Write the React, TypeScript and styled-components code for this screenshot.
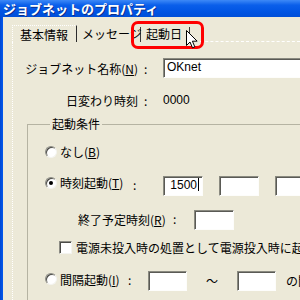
import React from 'react';
import styled, { createGlobalStyle } from 'styled-components';

/* ─── Global ─────────────────────────────────────────────── */

const GlobalStyle = createGlobalStyle`
  html, body {
    margin: 0;
    padding: 0;
    background: #ece9d8;
  }
  body {
    font-family: "Noto Sans CJK JP", "Noto Sans", sans-serif;
    font-size: 12px;
    color: #000;
  }
`;

/* ─── Window frame ───────────────────────────────────────── */

const Window = styled.div`
  position: relative;
  width: 300px;
  height: 300px;
  overflow: hidden;
  background: #ece9d8;
  display: flex;
  flex-direction: column;
`;

const TitleBar = styled.div`
  flex: none;
  height: 17px;
  padding-left: 3px;
  background: linear-gradient(#3d89f7 0%, #0a5fea 30%, #0054e3 70%, #004fd8 100%);
  color: #fff;
  font-weight: bold;
  font-size: 13px;
  line-height: 17px;
  white-space: nowrap;
  text-shadow: 1px 1px 0 #0b2f8c;
`;

const Frame = styled.div`
  flex: 1;
  display: flex;
  min-height: 0;
`;

const FrameEdge = styled.div`
  flex: none;
  width: 3px;
  background: linear-gradient(90deg, #0046d0, #0058ee);
`;

const Client = styled.div`
  flex: 1;
  min-width: 0;
  padding: 8px 0 0 9px;
  display: flex;
  flex-direction: column;
`;

/* ─── Tabs ───────────────────────────────────────────────── */

const TabStrip = styled.div`
  flex: none;
  display: flex;
  height: 17px;
`;

const Tab = styled.div<{ $active?: boolean; $w: number; $pad: number }>`
  flex: none;
  box-sizing: border-box;
  width: ${(p) => p.$w}px;
  padding-left: ${(p) => p.$pad}px;
  margin-top: ${(p) => (p.$active ? 0 : 2)}px;
  padding-top: ${(p) => (p.$active ? 2 : 0)}px;
  line-height: 14px;
  white-space: nowrap;
  border-top: ${(p) => (p.$active ? '1px dotted #fff' : 'none')};
  border-left: ${(p) => (p.$active ? '1px dotted #fff' : 'none')};
  border-right: 1px solid #2c2c2c;
  border-image: none;
  ${(p) => (p.$active ? '' : 'border-right-color: #3a3a3a;')}
`;

const TabFiller = styled.div`
  flex: 1;
  border-bottom: 1px dashed #fff;
`;

const Panel = styled.div`
  flex: 1;
  width: 560px;
  border-left: 1px dotted #fff;
  display: flex;
  flex-direction: column;
`;

/* ─── Form parts ─────────────────────────────────────────── */

const FieldRow = styled.div<{ $top: number }>`
  display: flex;
  align-items: center;
  height: 20px;
  margin-top: ${(p) => p.$top}px;
  white-space: nowrap;
`;

const FieldLabel = styled.div`
  width: 125px;
  text-align: right;
`;

const Colon = styled.div<{ $w: number; $pad?: number }>`
  flex: none;
  width: ${(p) => p.$w}px;
  padding-left: ${(p) => p.$pad ?? 6}px;
  box-sizing: border-box;
`;

const TextBox = styled.div<{ $w: number; $ml?: number; $right?: boolean }>`
  flex: none;
  box-sizing: border-box;
  width: ${(p) => p.$w}px;
  height: 20px;
  margin-left: ${(p) => p.$ml ?? 0}px;
  padding: 0 3px;
  background: #fff;
  border: 1px solid;
  border-color: #8a8a80 #fdfdfb #fdfdfb #8a8a80;
  box-shadow: inset 1px 1px 0 #5a5a55;
  line-height: 17px;
  text-align: ${(p) => (p.$right ? 'right' : 'left')};
  font-family: "Liberation Sans", "Noto Sans CJK JP", sans-serif;
  font-size: 12px;
`;

const Caret = styled.span`
  display: inline-block;
  width: 1px;
  height: 13px;
  margin-left: 1px;
  vertical-align: -2px;
  background: #000;
`;

const Value = styled.span`
  font-family: "Liberation Sans", sans-serif;
`;

const Group = styled.fieldset`
  margin: 7px 0 0 14px;
  padding: 0 0 0 17px;
  min-width: 0;
  width: 600px;
  box-sizing: border-box;
  flex: 1;
  border: 1px solid #b5b3a2;
  border-bottom: none;
`;

const Legend = styled.legend`
  margin-left: 5px;
  padding: 0 2px;
  line-height: 14px;
`;

const OptionRow = styled.div<{ $top: number; $h?: number; $indent?: number }>`
  display: flex;
  align-items: flex-start;
  height: ${(p) => p.$h ?? 20}px;
  margin-top: ${(p) => p.$top}px;
  padding-left: ${(p) => p.$indent ?? 0}px;
  white-space: nowrap;
`;

const Radio = styled.span<{ $checked?: boolean; $mt: number }>`
  flex: none;
  position: relative;
  box-sizing: border-box;
  width: 12px;
  height: 12px;
  margin-top: ${(p) => p.$mt}px;
  border-radius: 50%;
  background: #fff;
  border: 1px solid;
  border-color: #8c8c84 #f4f4f0 #f4f4f0 #8c8c84;
  box-shadow: inset 1px 1px 0 #4a4a46;

  &::after {
    content: '';
    display: ${(p) => (p.$checked ? 'block' : 'none')};
    position: absolute;
    left: 3px;
    top: 3px;
    width: 4px;
    height: 4px;
    border-radius: 50%;
    background: #000;
  }
`;

const Check = styled.span`
  flex: none;
  box-sizing: border-box;
  width: 13px;
  height: 13px;
  margin-top: 1px;
  background: #fff;
  border: 1px solid;
  border-color: #8c8c84 #f4f4f0 #f4f4f0 #8c8c84;
  box-shadow: inset 1px 1px 0 #4a4a46;
`;

const OptionText = styled.span<{ $w?: number; $ml?: number; $mt?: number }>`
  flex: none;
  ${(p) => (p.$w ? `width: ${p.$w}px;` : '')}
  margin-left: ${(p) => p.$ml ?? 3}px;
  margin-top: ${(p) => p.$mt ?? 0}px;
  line-height: 14px;
`;

const Key = styled.span`
  text-decoration: underline;
`;

/* ─── Annotation overlays ───────────────────────────────── */

const Highlight = styled.div`
  position: absolute;
  left: 131px;
  top: 21px;
  width: 73px;
  height: 28px;
  box-sizing: border-box;
  border: 3px solid #ff0000;
  border-radius: 7px;
  pointer-events: none;
`;

const Cursor = styled.svg`
  position: absolute;
  left: 186px;
  top: 30px;
`;

/* ─── Component ─────────────────────────────────────────── */

export default function App() {
  return (
    <>
      <GlobalStyle />
      <Window>
        <TitleBar>ジョブネットのプロパティ</TitleBar>
        <Frame>
          <FrameEdge />
          <Client>
            <TabStrip>
              <Tab $active $w={65} $pad={7}>基本情報</Tab>
              <Tab $w={64} $pad={5}>メッセージ</Tab>
              <Tab $w={49} $pad={5}>起動日</Tab>
              <TabFiller />
            </TabStrip>

            <Panel>
              <FieldRow $top={16}>
                <FieldLabel>
                  ジョブネット名称(<Key>N</Key>)
                </FieldLabel>
                <Colon $w={25}>:</Colon>
                <TextBox $w={200}>OKnet</TextBox>
              </FieldRow>

              <FieldRow $top={12}>
                <FieldLabel>日変わり時刻</FieldLabel>
                <Colon $w={25}>:</Colon>
                <Value>0000</Value>
              </FieldRow>

              <Group>
                <Legend>起動条件</Legend>

                <OptionRow $top={11}>
                  <Radio $mt={4} />
                  <OptionText $mt={3}>
                    なし(<Key>B</Key>)
                  </OptionText>
                </OptionRow>

                <OptionRow $top={14}>
                  <Radio $checked $mt={1} />
                  <OptionText $w={70} $mt={0}>
                    時刻起動(<Key>T</Key>)
                  </OptionText>
                  <Colon $w={33} $pad={3}>:</Colon>
                  <TextBox $w={40} $right>
                    1500
                    <Caret />
                  </TextBox>
                  <TextBox $w={40} $ml={16} />
                  <TextBox $w={40} $ml={16} />
                </OptionRow>

                <OptionRow $top={14} $indent={33}>
                  <OptionText $w={92} $ml={0} $mt={3}>
                    終了予定時刻(<Key>R</Key>)
                  </OptionText>
                  <Colon $w={24} $pad={3}>
                    <OptionText $ml={0} $mt={3}>:</OptionText>
                  </Colon>
                  <TextBox $w={40} />
                </OptionRow>

                <OptionRow $top={10} $h={16} $indent={14}>
                  <Check />
                  <OptionText $ml={4} $mt={1}>
                    電源未投入時の処置として電源投入時に起動する
                  </OptionText>
                </OptionRow>

                <OptionRow $top={15}>
                  <Radio $mt={2} />
                  <OptionText $w={66} $mt={2}>
                    間隔起動(<Key>I</Key>)
                  </OptionText>
                  <Colon $w={22} $pad={2}>
                    <OptionText $ml={0} $mt={2}>:</OptionText>
                  </Colon>
                  <TextBox $w={39} />
                  <OptionText $w={50} $ml={0} $mt={3} style={{ textAlign: 'center' }}>
                    ～
                  </OptionText>
                  <TextBox $w={39} />
                  <OptionText $ml={10} $mt={3}>
                    の間隔
                  </OptionText>
                </OptionRow>
              </Group>
            </Panel>
          </Client>
        </Frame>

        <Highlight />
        <Cursor width="13" height="19" viewBox="0 0 13 19">
          <path
            d="M0.5 0.5 L0.5 15.5 L4 12 L6.5 17.8 L8.8 16.8 L6.4 11.2 L11.2 11.2 Z"
            fill="#fff"
            stroke="#000"
            strokeWidth="1"
            strokeLinejoin="miter"
          />
        </Cursor>
      </Window>
    </>
  );
}
